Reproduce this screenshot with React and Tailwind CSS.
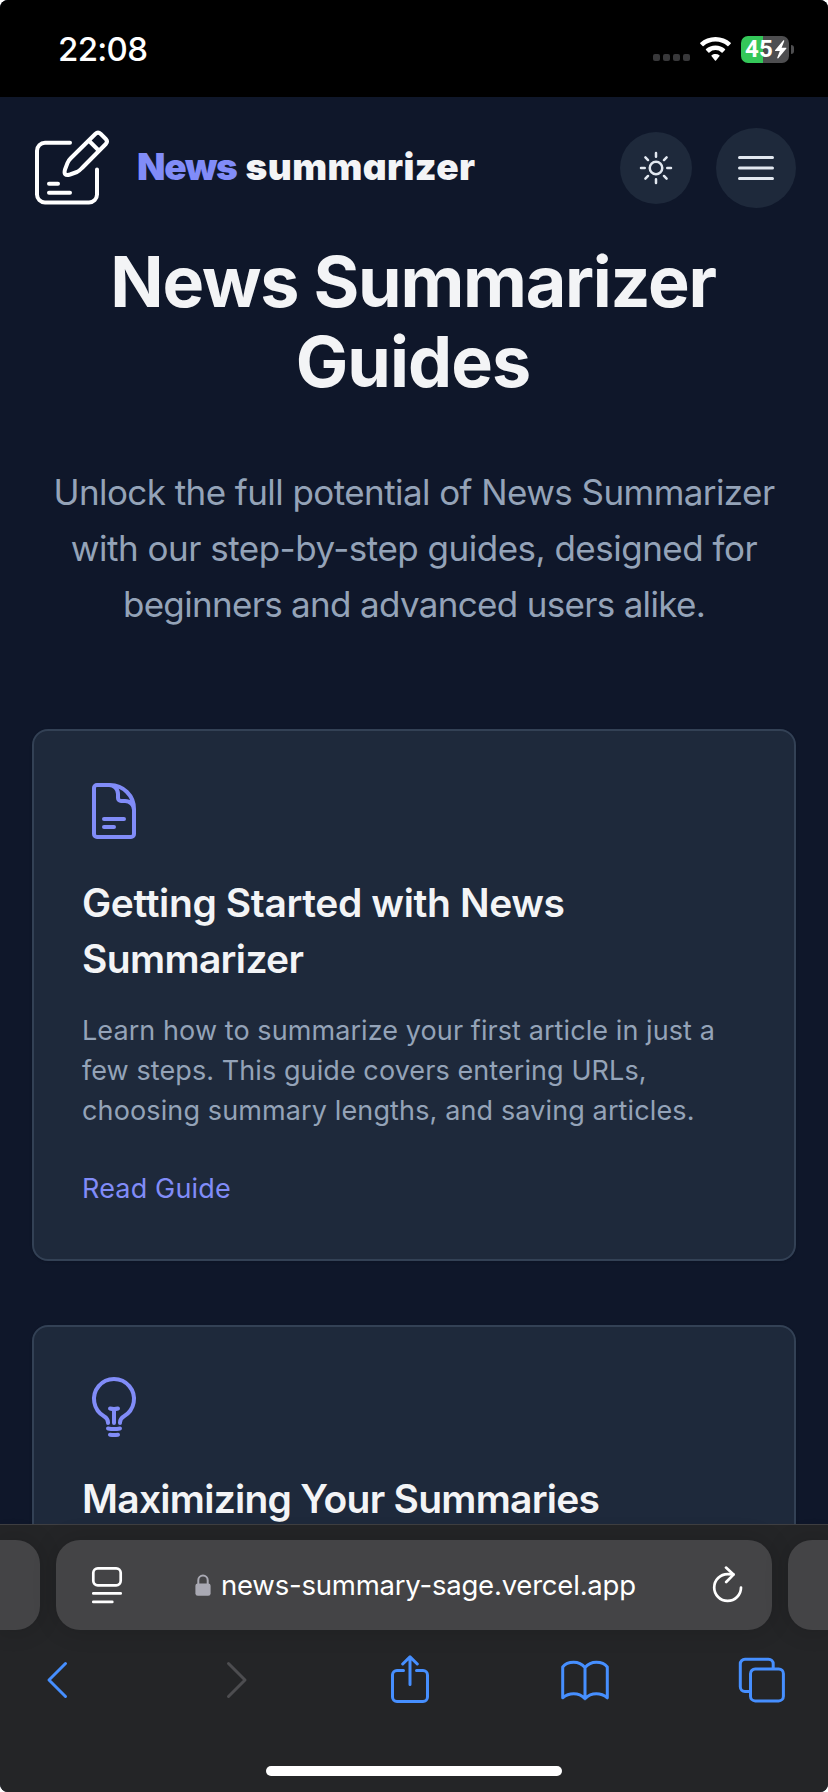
import {
  HiOutlineBars3,
  HiOutlineDocumentText,
  HiOutlineLightBulb,
  HiOutlineSun,
} from "react-icons/hi2";

function StatusBar() {
  return (
    <div className="flex h-[97px] shrink-0 items-start bg-black pr-[34px] pl-[58px] text-white">
      <div className="mt-[29px] text-[33px] leading-[40px] font-medium tracking-[-0.7px]">22:08</div>
      <div className="mt-[36px] ml-auto flex items-start">
        <div className="mt-[18px] mr-[10px] flex gap-[3px]">
          {[0, 1, 2, 3].map((i) => (
            <div key={i} className="size-[7px] rounded-[2px] bg-[#38383a]" />
          ))}
        </div>
        <svg className="mr-[10px] h-[27px] w-[31px]" viewBox="0 0 31 27" fill="currentColor">
          <path d="M15.5 1C9.6 1 4.2 3.2.3 6.8c-.3.3-.3.7 0 1l2.3 2.2c.3.3.7.3 1 0C6.7 7.2 11 5.6 15.5 5.6s8.8 1.6 11.9 4.4c.3.3.7.3 1 0l2.3-2.2c.3-.3.3-.7 0-1C26.8 3.2 21.4 1 15.5 1Z" />
          <path d="M15.5 9.5c-3.7 0-7 1.4-9.5 3.6-.3.3-.3.7 0 1l2.4 2.3c.3.3.7.3 1 0a9.2 9.2 0 0 1 12.2 0c.3.3.7.3 1 0l2.4-2.3c.3-.3.3-.7 0-1-2.5-2.2-5.8-3.6-9.5-3.6Z" />
          <path d="M15.5 17.9c-1.5 0-2.9.5-3.9 1.3-.3.3-.3.7 0 1l3.4 4.4c.3.3.7.3 1 0l3.4-4.4c.3-.3.3-.7 0-1a6.2 6.2 0 0 0-3.9-1.3Z" />
        </svg>
        <div className="flex h-[27px] w-[48px] items-center overflow-hidden rounded-[7px] bg-[linear-gradient(90deg,#34c759_22px,#4e4e50_22px)] pl-[4px]">
          <span className="font-['Roboto',sans-serif] text-[24px] leading-[27px] font-bold tracking-[0.3px]">45</span>
          <svg className="ml-[1px] h-[19px] w-[13px]" viewBox="0 0 13 19" fill="currentColor">
            <path d="M9.2.6 1.2 10c-.4.5-.2 1 .4 1h4.2L3.300 17.600c-.3.800.5 1.200 1 .6l7.900-9.400c.4-.5.200-1-.4-1H7.600L10.200 1.200C10.500.4 9.700 0 9.200.6Z" />
          </svg>
        </div>
        <div className="mt-[9px] ml-[2px] h-[9px] w-[3px] rounded-r-[3px] bg-[#4e4e50]" />
      </div>
    </div>
  );
}

function Logo() {
  return (
    <svg
      className="size-20 shrink-0"
      viewBox="0 0 80 80"
      fill="none"
      stroke="#fff"
      strokeWidth="4"
      strokeLinecap="round"
      strokeLinejoin="round"
    >
      <path d="M38 14.7H13a8 8 0 0 0-8 8v43.8a8 8 0 0 0 8 8h44a8 8 0 0 0 8-8V41.5" />
      <path d="M68.8 6 73.8 11Q76.2 13.5 73.8 16L50 40Q47.5 42.7 45 44L38 46.5Q31 48.5 33 41.5L35.5 35Q36.5 32.5 38.5 30.5L63.3 6Q66 3.3 68.8 6Z" />
      <path d="M57.7 13.5 66.7 22.5" />
      <path d="M17 55.8h9M17 64.7h21" />
    </svg>
  );
}

function Header() {
  return (
    <header className="flex h-[142px] shrink-0 items-center px-8">
      <Logo />
      <div className="mb-[3px] ml-[25px] text-[37px] leading-[44px] font-black whitespace-nowrap text-[#f3f4f6] [font-feature-settings:'cv11']">
        <span className="tracking-[-1.3px] text-[#818cf8]">News</span>
        <span className="ml-[9px] tracking-[0.4px]">summarizer</span>
      </div>
      <div className="ml-auto flex size-[72px] items-center justify-center rounded-full bg-[#1e293b] text-[#e2e8f0]">
        <HiOutlineSun className="size-10" />
      </div>
      <div className="ml-6 flex size-20 items-center justify-center rounded-full bg-[#1e293b] text-[#e2e8f0]">
        <HiOutlineBars3 className="size-12" />
      </div>
    </header>
  );
}

function GuideCard({ icon: Icon, children }) {
  return (
    <article className="h-[532px] shrink-0 rounded-2xl border-2 border-[#334155] bg-[#1e293b] p-12 shadow-sm">
      <Icon className="size-16 text-[#818cf8]" />
      {children}
    </article>
  );
}

function TabIcon({ box, d, className }) {
  return (
    <svg
      className={className}
      viewBox={box}
      fill="none"
      stroke="currentColor"
      strokeWidth="3"
      strokeLinecap="round"
      strokeLinejoin="round"
    >
      <path d={d} />
    </svg>
  );
}

function BrowserBar() {
  return (
    <footer className="flex h-[268px] shrink-0 flex-col border-t border-[#3f3f42] bg-[#242527] text-[#468fff]">
      <div className="mt-[15px] flex h-[90px] justify-between text-white">
        <div className="w-10 rounded-r-[24px] bg-[#444446] shadow-[0_0_24px_rgba(0,0,0,0.16)]" />
        <div className="flex w-[716px] items-center rounded-[24px] bg-[#444446] pr-[29px] pl-[35px] shadow-[0_0_24px_rgba(0,0,0,0.16)]">
          <svg className="h-[38px] w-[32px]" viewBox="0 0 32 38" fill="none" stroke="currentColor" strokeWidth="2.7" strokeLinecap="round">
            <rect x="2.3" y="2.3" width="27.4" height="17" rx="4.5" />
            <path d="M2.3 27.4h27.4M2.3 35.9h19" />
          </svg>
          <svg className="ml-[72px] h-[22px] w-[16px] text-[#a9a9b3]" viewBox="0 0 16 22">
            <path d="M3.3 10V6.2a4.7 4.7 0 0 1 9.4 0V10" fill="none" stroke="currentColor" strokeWidth="2" />
            <rect x=".4" y="9.4" width="15.2" height="12.4" rx="2.4" fill="currentColor" />
          </svg>
          <span className="ml-[10px] text-[27.5px] leading-[36px] tracking-[-0.21px] whitespace-nowrap">
            news-summary-sage.vercel.app
          </span>
          <svg className="ml-auto h-[38px] w-[32px]" viewBox="0 0 32 38" fill="none" stroke="currentColor" strokeWidth="2.7" strokeLinecap="round" strokeLinejoin="round">
            <path d="M30 21.5a13.4 13.4 0 1 1-13.4-13.4q3.3 0 5.8.2" />
            <path d="M15 1.6 22.5 8.600 15.200 16" />
          </svg>
        </div>
        <div className="w-10 rounded-l-[24px] bg-[#444446] shadow-[0_0_24px_rgba(0,0,0,0.16)]" />
      </div>
      <div className="mt-[21px] flex h-[58px] items-center pl-[45px]">
        <TabIcon className="h-10 w-6" box="0 0 24 40" d="M20.5 3.5 4 20 20.5 36.5" />
        <TabIcon className="ml-[156px] h-10 w-6 text-[#4d4d50]" box="0 0 24 40" d="M3.5 3.5 20 20 3.5 36.5" />
        <TabIcon
          className="ml-[141px] h-[50px] w-10"
          box="0 0 40 50"
          d="M13.5 15.5H7a4.5 4.5 0 0 0-4.5 4.5v22a4.5 4.5 0 0 0 4.5 4.5h26a4.5 4.5 0 0 0 4.5-4.5V20a4.5 4.5 0 0 0-4.5-4.5H26.5M20 29.5V2M12.7 9 20 1.900 27.300 9"
        />
        <TabIcon
          className="ml-[130px] h-[42px] w-[50px]"
          box="0 0 50 42"
          d="M25 8.5C22 5 18 3.3 13.7 3.3S5 5 2.7 8v30.8c3.3-2.8 7-4 11-4s8 1.5 11.3 4.8c3.3-3.3 7.3-4.8 11.3-4.8s7.7 1.2 11 4V8C45 5 40.600 3.300 36.300 3.300S28 5 25 8.500ZM25 8.500v31"
        />
        <TabIcon
          className="ml-[128px] h-[46px] w-[47px]"
          box="0 0 47 46"
          d="M12 34.5H7a4.7 4.7 0 0 1-4.7-4.7V7A4.7 4.7 0 0 1 7 2.3h23.5a4.7 4.7 0 0 1 4.7 4.7v5M17.2 12h23.5a4.7 4.7 0 0 1 4.7 4.7v22.5a4.7 4.7 0 0 1-4.7 4.7H17.2a4.7 4.7 0 0 1-4.7-4.7V16.7A4.7 4.7 0 0 1 17.2 12Z"
        />
      </div>
      <div className="mt-[57px] h-[10px] w-[296px] self-center rounded-full bg-white" />
    </footer>
  );
}

export default function App() {
  return (
    <div className="h-[1792px] w-[828px] bg-white font-['Inter',sans-serif]">
      <div className="flex h-full flex-col overflow-hidden rounded-[8px] bg-[#0f172a]">
        <StatusBar />
        <main className="flex min-h-0 flex-1 flex-col overflow-hidden">
          <Header />
          <h1 className="mt-[3px] flex shrink-0 flex-col items-center text-[70px] leading-[80px] font-bold whitespace-nowrap text-[#f3f4f6]">
            <span className="mr-[2px] tracking-[-1.25px]">News Summarizer</span>
            <span className="mr-[2px] tracking-[-0.94px]">Guides</span>
          </h1>
          <p className="mt-[62px] flex shrink-0 flex-col items-center text-[35px] leading-[56px] whitespace-nowrap text-[#94a3b8]">
            <span className="tracking-[-0.57px]">Unlock the full potential of News Summarizer</span>
            <span className="tracking-[-0.5px]">with our step-by-step guides, designed for</span>
            <span className="tracking-[-0.68px]">beginners and advanced users alike.</span>
          </p>
          <div className="mt-[97px] flex flex-col gap-16 px-8">
            <GuideCard icon={HiOutlineDocumentText}>
              <h2 className="mt-8 flex flex-col text-[39px] leading-[56px] font-semibold whitespace-nowrap text-[#f3f4f6]">
                <span className="tracking-[-0.38px]">Getting Started with News</span>
                <span className="tracking-[-0.65px]">Summarizer</span>
              </h2>
              <p className="mt-6 flex flex-col text-[27px] leading-[40px] whitespace-nowrap text-[#94a3b8]">
                <span className="tracking-[0.083px]">Learn how to summarize your first article in just a</span>
                <span className="tracking-[0.082px]">few steps. This guide covers entering URLs,</span>
                <span className="tracking-[0.125px]">choosing summary lengths, and saving articles.</span>
              </p>
              <div className="mt-[38px] text-[27px] leading-[40px] tracking-[0.17px] text-[#818cf8]">Read Guide</div>
            </GuideCard>
            <GuideCard icon={HiOutlineLightBulb}>
              <h2 className="mt-8 text-[39px] leading-[56px] font-semibold tracking-[-0.74px] whitespace-nowrap text-[#f3f4f6]">
                Maximizing Your Summaries
              </h2>
            </GuideCard>
          </div>
        </main>
        <BrowserBar />
      </div>
    </div>
  );
}
